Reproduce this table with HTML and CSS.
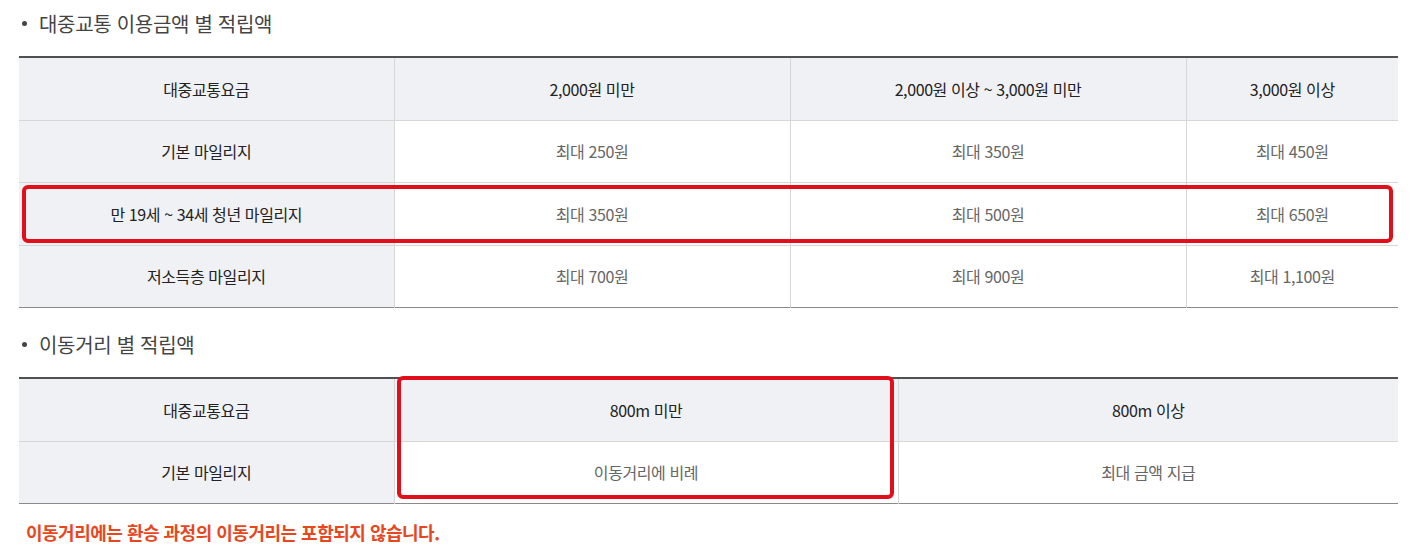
FILE: index.html
```html
<!DOCTYPE html>
<html lang="ko">
<head>
<meta charset="utf-8">
<link rel="stylesheet" href="styles.css">
</head>
<body>
<div class="page">
  <h3 class="sub-title"><span class="dot"></span>대중교통 이용금액 별 적립액</h3>
  <div class="table-wrap">
    <table class="tbl tbl-amount">
      <colgroup><col class="c1"><col class="c2"><col class="c3"><col class="c4"></colgroup>
      <thead>
        <tr><th class="rowhead">대중교통요금</th><th>2,000원 미만</th><th>2,000원 이상 ~ 3,000원 미만</th><th>3,000원 이상</th></tr>
      </thead>
      <tbody>
        <tr><th class="rowhead">기본 마일리지</th><td>최대 250원</td><td>최대 350원</td><td>최대 450원</td></tr>
        <tr><th class="rowhead">만 19세 ~ 34세 청년 마일리지</th><td>최대 350원</td><td>최대 500원</td><td>최대 650원</td></tr>
        <tr><th class="rowhead">저소득층 마일리지</th><td>최대 700원</td><td>최대 900원</td><td>최대 1,100원</td></tr>
      </tbody>
    </table>
    <div class="mark mark-row"></div>
  </div>
  <h3 class="sub-title second"><span class="dot"></span>이동거리 별 적립액</h3>
  <div class="table-wrap">
    <table class="tbl tbl-dist">
      <colgroup><col class="d1"><col class="d2"><col class="d3"></colgroup>
      <thead>
        <tr><th class="rowhead">대중교통요금</th><th>800m 미만</th><th>800m 이상</th></tr>
      </thead>
      <tbody>
        <tr><th class="rowhead">기본 마일리지</th><td>이동거리에 비례</td><td>최대 금액 지급</td></tr>
      </tbody>
    </table>
    <div class="mark mark-col"></div>
  </div>
  <p class="note">이동거리에는 환승 과정의 이동거리는 포함되지 않습니다.</p>
</div>
</body>
</html>
```

FILE: styles.css
```css
html, body {
  margin: 0;
  padding: 0;
  background: #ffffff;
}
body {
  font-family: "Noto Sans CJK KR", "Noto Sans", sans-serif;
  color: #333;
}
.page {
  width: 1379px;
  padding-left: 19px;
}
.sub-title {
  display: flex;
  align-items: center;
  gap: 12px;
  margin: 0;
  height: 56px;
  padding-bottom: 10px;
  box-sizing: border-box;
  font-size: 20px;
  font-weight: 400;
  color: #444;
  letter-spacing: -0.3px;
  padding-left: 3px;
}
.sub-title.second {
  height: 69px;
  padding-top: 3px;
  padding-bottom: 0;
}
.dot {
  width: 5px;
  height: 5px;
  border-radius: 50%;
  background: #444;
}
.table-wrap {
  position: relative;
}
.tbl {
  width: 1379px;
  border-collapse: collapse;
  table-layout: fixed;
  border-top: 2px solid #505050;
  border-bottom: 1px solid #8a8a8a;
}
.c1 { width: 375px; }
.c2 { width: 396px; }
.c3 { width: 396px; }
.c4 { width: 212px; }
.d1 { width: 375px; }
.d2 { width: 504px; }
.d3 { width: 500px; }
.tbl th, .tbl td {
  height: 61.5px;
  padding: 0;
  text-align: center;
  vertical-align: middle;
  font-size: 16px;
  letter-spacing: -0.4px;
  border-top: 1px solid #d6d6d6;
  border-left: 1px solid #d6d6d6;
}
.tbl tr > :first-child {
  border-left: none;
}
.tbl thead th {
  border-top: none;
  background: #f0f1f5;
  font-weight: 400;
  color: #222;
}
.tbl th.rowhead {
  background: #f0f1f5;
  font-weight: 400;
  color: #222;
}
.tbl td {
  color: #666;
  font-weight: 400;
  background: #fff;
}
.mark {
  position: absolute;
  border: 4px solid #e10f1b;
  border-radius: 6px;
  box-sizing: border-box;
  pointer-events: none;
}
.mark-row {
  left: 3px;
  top: 129px;
  width: 1371px;
  height: 58px;
}
.mark-col {
  left: 378px;
  top: -1px;
  width: 497px;
  height: 123px;
}
.note {
  margin: 15px 0 0 7px;
  font-size: 18px;
  font-weight: 700;
  color: #e8471e;
  letter-spacing: -0.5px;
}
```
